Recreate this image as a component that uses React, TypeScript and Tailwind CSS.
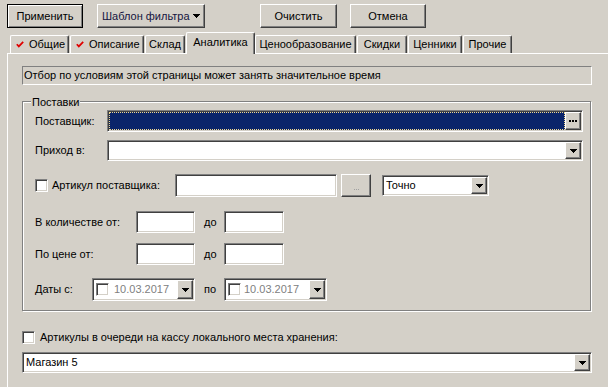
import React from "react";

const RAISED =
  "border border-t-white border-l-white border-r-[#404040] border-b-[#404040] shadow-[inset_-1px_-1px_0_#808080]";
const SUNKEN =
  "border border-t-[#808080] border-l-[#808080] border-r-white border-b-white shadow-[inset_1px_1px_0_#404040,inset_-1px_-1px_0_#d4d0c8] p-[1px]";

function Arrow({ color = "#000" }: { color?: string }) {
  return (
    <svg width="7" height="4" viewBox="0 0 7 4" shapeRendering="crispEdges">
      <rect x="0" y="0" width="7" height="1" fill={color} />
      <rect x="1" y="1" width="5" height="1" fill={color} />
      <rect x="2" y="2" width="3" height="1" fill={color} />
      <rect x="3" y="3" width="1" height="1" fill={color} />
    </svg>
  );
}

function DropBtn() {
  return (
    <div className={`${RAISED} w-[16px] h-full bg-[#d4d0c8] flex items-center justify-center shrink-0`}>
      <Arrow />
    </div>
  );
}

function Dots({ color = "#000", size = 2 }: { color?: string; size?: number }) {
  const gap = size === 2 ? 3 : 2;
  const w = gap * 2 + size;
  return (
    <svg width={w} height={size} viewBox={`0 0 ${w} ${size}`} shapeRendering="crispEdges">
      <rect x="0" y="0" width={size} height={size} fill={color} />
      <rect x={gap} y="0" width={size} height={size} fill={color} />
      <rect x={gap * 2} y="0" width={size} height={size} fill={color} />
    </svg>
  );
}

function Check() {
  return (
    <svg width="8" height="7" viewBox="0 0 8 7" className="shrink-0">
      <polyline points="0.8,3.2 2.8,5.4 7.2,0.8" fill="none" stroke="#e00000" strokeWidth="1.7" />
    </svg>
  );
}

function CheckBox() {
  return <div className={`${SUNKEN} w-[13px] h-[13px] bg-white shrink-0`} />;
}

function Tab({
  children,
  className,
  selected,
}: {
  children: React.ReactNode;
  className: string;
  selected?: boolean;
}) {
  return (
    <div
      className={`${className} ${
        selected ? "h-[22px] -mb-[1px] relative z-10 pb-[3px]" : "h-[18px]"
      } bg-[#d4d0c8] border-t border-l border-white border-r border-r-[#404040] shadow-[inset_-1px_0_0_#808080] rounded-t-[2px] flex items-center`}
    >
      {children}
    </div>
  );
}

function DatePicker({ textMl }: { textMl: string }) {
  return (
    <div className={`${SUNKEN} w-[103px] h-[23px] bg-white flex items-center`}>
      <div className="ml-[2px]">
        <CheckBox />
      </div>
      <span className={`${textMl} flex-1 text-[#808080]`}>10.03.2017</span>
      <DropBtn />
    </div>
  );
}

export default function App() {
  return (
    <div className="w-[608px] h-[387px] overflow-hidden bg-[#d4d0c8] text-black text-[11px] leading-[13px] font-['Liberation_Sans',Arial,sans-serif] select-none">
      {/* toolbar */}
      <div className="flex h-[32px] pt-[4px] pl-[7px]">
        <div className="w-[76px] h-[24px] border border-black shadow-[inset_1px_1px_0_#fff,inset_-1px_-1px_0_#808080] flex items-center justify-center">
          Применить
        </div>
        <div className={`${RAISED} ml-[14px] w-[108px] h-[24px] flex items-center pl-[4px] text-[#141440]`}>
          <span>Шаблон фильтра</span>
          <span className="ml-[3px] flex items-center">
            <Arrow />
          </span>
        </div>
        <div className={`${RAISED} ml-[55px] w-[77px] h-[24px] flex items-center justify-center`}>
          Очистить
        </div>
        <div className={`${RAISED} ml-[13px] w-[76px] h-[24px] flex items-center justify-center`}>
          Отмена
        </div>
      </div>

      {/* tabs */}
      <div className="flex items-end h-[21px] pl-[10px]">
        <Tab className="w-[59px] pl-[5px]">
          <Check />
          <span className="ml-[5px]">Общие</span>
        </Tab>
        <Tab className="ml-[1px] w-[74px] pl-[5px]">
          <Check />
          <span className="ml-[5px]">Описание</span>
        </Tab>
        <Tab className="ml-[1px] w-[40px] justify-center">Склад</Tab>
        <Tab className="ml-[1px] w-[69px] justify-center" selected>
          Аналитика
        </Tab>
        <Tab className="w-[101px] justify-center">Ценообразование</Tab>
        <Tab className="ml-[1px] w-[50px] justify-center">Скидки</Tab>
        <Tab className="ml-[1px] w-[54px] justify-center">Ценники</Tab>
        <Tab className="ml-[1px] w-[49px] justify-center">Прочие</Tab>
      </div>

      {/* panel */}
      <div className="ml-[7px] w-[620px] h-[340px] border-t border-l border-white pt-[12px] pl-[14px]">
        <div className="w-[570px] h-[19px] border border-t-[#808080] border-l-[#808080] border-b-white border-r-white flex items-center pl-[1px]">
          Отбор по условиям этой страницы может занять значительное время
        </div>

        {/* group box */}
        <div className="relative mt-[16px] w-[569px] h-[210px] border border-[#808080] shadow-[1px_1px_0_#fff,inset_1px_1px_0_#fff] pl-[12px] pt-[8px]">
          <div className="absolute -top-[6px] left-[8px] px-[1px] bg-[#d4d0c8]">Поставки</div>

          {/* Поставщик */}
          <div className="flex items-center h-[22px]">
            <span className="w-[72px] shrink-0">Поставщик:</span>
            <div className={`${SUNKEN} w-[476px] h-full flex bg-white`}>
              <div className="flex-1 bg-[#0a246a] border border-dotted border-[#f0d890]" />
              <div className={`${RAISED} w-[16px] h-full bg-[#d4d0c8] flex items-center justify-center shrink-0`}>
                <Dots />
              </div>
            </div>
          </div>

          {/* Приход в */}
          <div className="flex items-center h-[21px] mt-[8px]">
            <span className="w-[72px] shrink-0">Приход в:</span>
            <div className={`${SUNKEN} w-[476px] h-full flex bg-white`}>
              <div className="flex-1" />
              <DropBtn />
            </div>
          </div>

          {/* Артикул поставщика */}
          <div className="flex items-center h-[23px] mt-[13px]">
            <div className="w-[140px] flex items-center shrink-0">
              <CheckBox />
              <span className="ml-[4px]">Артикул поставщика:</span>
            </div>
            <div className={`${SUNKEN} w-[162px] h-full bg-white`} />
            <div className={`${RAISED} ml-[4px] w-[30px] h-full flex items-end justify-center pb-[6px]`}>
              <Dots color="#a0a0a0" size={1} />
            </div>
            <div className={`${SUNKEN} ml-[11px] w-[107px] h-[21px] bg-white flex items-center`}>
              <span className="flex-1 pl-[2px]">Точно</span>
              <DropBtn />
            </div>
          </div>

          {/* В количестве */}
          <div className="flex items-center h-[22px] mt-[14px]">
            <span className="w-[101px] shrink-0">В количестве от:</span>
            <div className={`${SUNKEN} w-[59px] h-full bg-white`} />
            <span className="w-[29px] pl-[9px] shrink-0">до</span>
            <div className={`${SUNKEN} w-[60px] h-full bg-white`} />
          </div>

          {/* По цене */}
          <div className="flex items-center h-[22px] mt-[10px]">
            <span className="w-[101px] shrink-0">По цене от:</span>
            <div className={`${SUNKEN} w-[59px] h-full bg-white`} />
            <span className="w-[29px] pl-[9px] shrink-0">до</span>
            <div className={`${SUNKEN} w-[60px] h-full bg-white`} />
          </div>

          {/* Даты */}
          <div className="flex items-center h-[23px] mt-[13px]">
            <span className="w-[57px] shrink-0">Даты с:</span>
            <DatePicker textMl="ml-[5px]" />
            <span className="w-[29px] pl-[9px] shrink-0">по</span>
            <DatePicker textMl="ml-[3px]" />
          </div>
        </div>

        {/* bottom checkbox */}
        <div className="flex items-center h-[13px] mt-[20px]">
          <CheckBox />
          <span className="ml-[5px]">Артикулы в очереди на кассу локального места хранения:</span>
        </div>

        <div className={`${SUNKEN} mt-[8px] w-[570px] h-[21px] bg-white flex items-center`}>
          <span className="flex-1 pl-[2px]">Магазин 5</span>
          <DropBtn />
        </div>
      </div>
    </div>
  );
}
